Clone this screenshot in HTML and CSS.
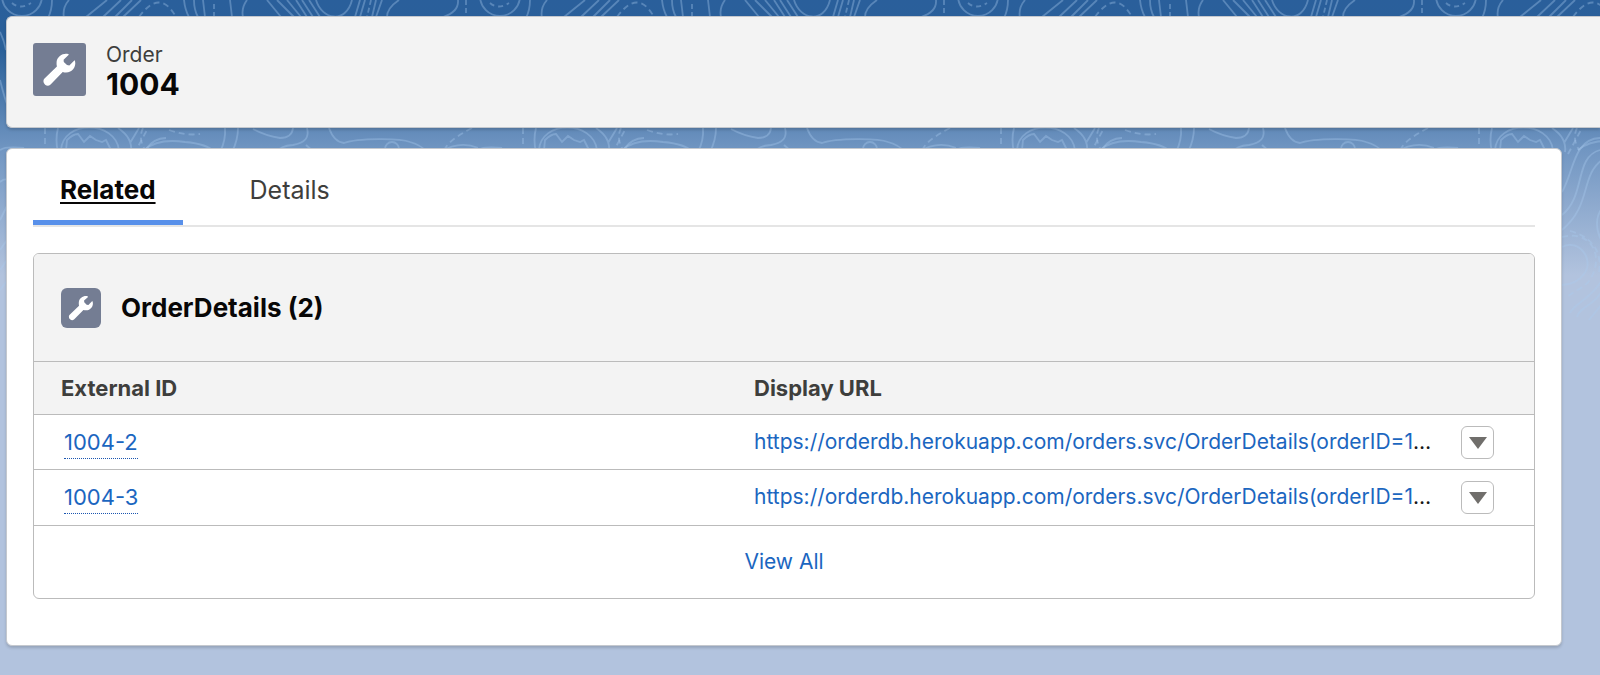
FILE: index.html
```
<!DOCTYPE html>
<html lang="en">
<head>
<meta charset="utf-8">
<meta name="viewport" content="width=device-width, initial-scale=1">
<title>Order 1004</title>
<link rel="stylesheet" href="styles.css">
</head>
<body>
<svg class="backdrop" aria-hidden="true">
  <defs>
    <pattern id="contours" width="478" height="340" patternUnits="userSpaceOnUse">
      <g fill="none" stroke="#a9cbee" stroke-opacity=".36" stroke-width="1.8">
        <circle cx="22" cy="-4" r="20"/>
        <path d="M12 3Q20 10 31 3" stroke-dasharray="5 4"/>
        <path d="M52 0Q52 10 48 18M69 0Q62 8 64 18M86 17L107 0M103 17L121 0M115 17L132 0M123 17L141 0"/>
        <path d="M139 17Q160-12 176 17" stroke-dasharray="6 4"/>
        <path d="M184 0Q185 10 189 17M194 0Q194 10 198 17M203 0L205 17M230 0L232 17M247 0Q241 8 243 17"/>
        <path d="M214 4V17M371 0L367 17M466 0V17" stroke-dasharray="5 3"/>
        <path d="M267 0L281 17M277 0L294 17M287 0L301 17M296 0L307 17M302 0L313 17M309 0L320 17M316 0C322 20 346 24 352 0M360 0L355 17M365 0L360 17M376 0L372 17M382 0L376 17M399 0Q387 8 387 17M458 0Q459 12 443 17"/>
        <path d="M0 32Q4 40 6 50M0 80Q4 96 7 104M0 150Q5 146 24 148M0 182Q5 178 7 180M0 220Q4 212 7 206M0 250L7 240M0 270L7 260M0 290L7 281"/>
        <path d="M45 128V150M143 128Q138 138 145 150M169 130Q185 136 200 134M472 128Q445 142 444 152" stroke-dasharray="6 4"/>
        <path d="M58 128Q55 140 58 152M61 150C63 120 115 120 119 150M66 150L67 140Q73 134 78 134L84 142L90 136L96 140L102 142L106 140L111 150M118 128Q133 138 131 152M139 128L130 143"/>
        <path d="M144 150Q158 138 185 142Q208 144 214 152M225 128Q226 140 220 152M238 128Q238 140 232 152M253 129Q266 136 280 138Q292 138 293 128M307 128Q311 142 293 145Q280 146 277 152M306 145L314 152M329 128Q334 142 344 143C358 138 400 138 410 142Q421 145 427 152"/>
        <circle cx="392" cy="149" r="7"/>
        <path d="M440 152Q460 140 478 148"/>
        <path d="M128 192C140 172 139 139 166 138M128 215C152 196 140 157 166 150M128 230C158 205 146 176 168 160M168 208Q158 222 168 242M128 247C145 238 161 260 150 274Q143 284 128 285M136 313C140 304 158 298 168 280M143 317C146 306 160 306 168 291M155 320L168 304"/>
        <path d="M134 154L147 130M128 237C154 230 170 252 158 276C153 288 140 290 132 298M136 231C164 238 169 260 164 276" stroke-dasharray="6 4"/>
      </g>
    </pattern>
  </defs>
  <rect width="100%" height="340" fill="url(#contours)"/>
</svg>

<main class="page">
  <header class="card page-header">
    <svg class="entity-icon entity-icon-large" viewBox="0 0 53 53" aria-hidden="true">
      <path class="wrench" d="M35.600 11.200C30.800 9.400 24.300 13 23.600 18.800C23.400 20.600 23.600 22 23.900 23.400L11.500 35.600C8.200 39.200 13.300 45.300 17.600 41.500L29.700 29C37.300 31.400 43.800 25.300 42 18.100C41.800 17.500 41.200 17.500 40.800 17.900L36.300 22.400L34 22.100L30.800 18.900L30.600 16.700L35.500 12.100C35.900 11.800 35.900 11.400 35.600 11.200Z"/>
    </svg>
    <h1 class="page-title">
      <span class="entity-name">Order</span>
      <span class="record-name">1004</span>
    </h1>
  </header>

  <section class="card record">
    <div class="tabs" role="tablist">
      <button class="tab tab-active" type="button" role="tab" id="tab-related" aria-selected="true" aria-controls="panel-related">Related</button>
      <button class="tab" type="button" role="tab" aria-selected="false">Details</button>
    </div>

    <article class="related" role="tabpanel" id="panel-related" aria-labelledby="tab-related">
      <header class="related-header">
        <svg class="entity-icon entity-icon-small" viewBox="0 0 53 53" aria-hidden="true">
          <path class="wrench" d="M35.600 11.200C30.800 9.400 24.300 13 23.600 18.800C23.400 20.600 23.600 22 23.900 23.400L11.500 35.600C8.200 39.200 13.300 45.300 17.600 41.500L29.700 29C37.300 31.400 43.800 25.300 42 18.100C41.800 17.500 41.200 17.500 40.800 17.900L36.300 22.400L34 22.100L30.800 18.900L30.600 16.700L35.500 12.100C35.900 11.800 35.900 11.400 35.600 11.200Z"/>
        </svg>
        <h2 class="related-title">OrderDetails (2)</h2>
      </header>
      <table class="grid">
        <colgroup><col class="col-id"><col class="col-url"><col class="col-action"></colgroup>
        <thead>
          <tr><th scope="col">External ID</th><th class="url" scope="col">Display URL</th><td></td></tr>
        </thead>
        <tbody>
          <tr>
            <td><a class="record-link" href="#">1004-2</a></td>
            <td class="url"><div class="truncate"><a href="#">https://orderdb.herokuapp.com/orders.svc/OrderDetails(orderID=1004)</a></div></td>
            <td class="action"><button class="menu-button" type="button" aria-label="Show actions for 1004-2"><svg class="caret" viewBox="0 0 18 12" aria-hidden="true"><path d="M0 0H18L9 12Z"/></svg></button></td>
          </tr>
          <tr>
            <td><a class="record-link" href="#">1004-3</a></td>
            <td class="url"><div class="truncate"><a href="#">https://orderdb.herokuapp.com/orders.svc/OrderDetails(orderID=1004)</a></div></td>
            <td class="action"><button class="menu-button" type="button" aria-label="Show actions for 1004-3"><svg class="caret" viewBox="0 0 18 12" aria-hidden="true"><path d="M0 0H18L9 12Z"/></svg></button></td>
          </tr>
        </tbody>
      </table>
      <footer class="related-footer"><a href="#">View All</a></footer>
    </article>
  </section>
</main>
</body>
</html>
```
FILE: styles.css
```
* {
  box-sizing: border-box;
}

body {
  margin: 0;
  min-height: 100vh;
  overflow-x: hidden;
  background: #b2c3de linear-gradient(#2a5f9b 0, #2a6099 50px, #7196c2 150px, #b2c3de 275px) no-repeat;
  font-family: Inter, "Liberation Sans", sans-serif;
  font-size: 21px;
  line-height: 28px;
  color: #181818;
}

.backdrop {
  position: absolute;
  inset: 0;
  z-index: -1;
  width: 100%;
  height: 340px;
}

a {
  color: #1b66c0;
  text-decoration: none;
}

.page {
  display: flex;
  flex-direction: column;
  gap: 20px;
  padding: 16px 0 28px 6px;
}

.card {
  border: 1px solid #c4c8ce;
  border-radius: 6px;
  background: #fff;
  box-shadow: 0 2px 3px rgba(0, 0, 0, 0.16);
}

.page-header {
  display: flex;
  align-items: flex-start;
  gap: 20px;
  padding: 26px 26px 26px;
  border-right: 0;
  border-radius: 6px 0 0 6px;
  background: #f3f3f3;
}

.entity-icon {
  flex: none;
  background: #747d93;
}

.entity-icon-large {
  width: 53px;
  height: 53px;
  border-radius: 3px;
}

.entity-icon-small {
  width: 40px;
  height: 40px;
  border-radius: 6px;
}

.wrench {
  fill: #fff;
}

.page-title {
  display: flex;
  flex-direction: column;
  margin: 0;
}

.entity-name {
  font-size: 21px;
  font-weight: 400;
  line-height: 24px;
  color: #3e3e3c;
}

.record-name {
  font-size: 30px;
  font-weight: 700;
  line-height: 34px;
  color: #080707;
}

.record {
  margin-right: 38px;
  padding: 0 26px 46px;
}

.tabs {
  display: flex;
  gap: 40px;
  border-bottom: 2px solid #e5e5e5;
}

.tab {
  padding: 27px 27px 16px;
  border: 0;
  border-bottom: 5px solid transparent;
  background: none;
  font: 400 25px/28px Inter, "Liberation Sans", sans-serif;
  color: #3e3e3c;
}

.tab-active {
  border-bottom-color: #5890ea;
  font-size: 26px;
  font-weight: 700;
  color: #080707;
  text-decoration: underline;
  text-decoration-thickness: 2px;
  text-underline-offset: 3px;
}

.related {
  margin-top: 26px;
  overflow: hidden;
  border: 1px solid #bbb;
  border-radius: 6px;
}

.related-header {
  display: flex;
  align-items: center;
  gap: 20px;
  padding: 34px 27px 33px;
  background: #f3f3f3;
}

.related-title {
  margin: 0;
  font-size: 26px;
  font-weight: 700;
  line-height: 32px;
  color: #080707;
}

.grid {
  width: 100%;
  table-layout: fixed;
  border-collapse: collapse;
}

.col-id {
  width: 46%;
}

.col-action {
  width: 100px;
}

.grid th,
.grid td {
  height: 55px;
  padding: 0 0 0 27px;
  border-top: 1px solid #bbb;
  text-align: left;
}

.grid thead th,
.grid thead td {
  height: 53px;
  background: #f3f3f3;
  font-size: 22px;
  font-weight: 700;
  color: #3e3e3c;
}

.grid .url {
  padding-left: 30px;
}

.record-link {
  display: inline-block;
  margin-left: 3px;
  border-bottom: 1px dotted #1b56b0;
  font-size: 22px;
  line-height: 32px;
}

.truncate {
  overflow: hidden;
  text-overflow: ellipsis;
  white-space: nowrap;
}

.menu-button {
  display: grid;
  place-items: center;
  width: 33px;
  height: 33px;
  padding: 2px 0 0;
  border: 1px solid #bbb;
  border-radius: 6px;
  background: #fff;
}

.caret {
  width: 18px;
  height: 12px;
  fill: #706e6b;
}

.related-footer {
  padding: 22px;
  border-top: 1px solid #bbb;
  text-align: center;
}
```
